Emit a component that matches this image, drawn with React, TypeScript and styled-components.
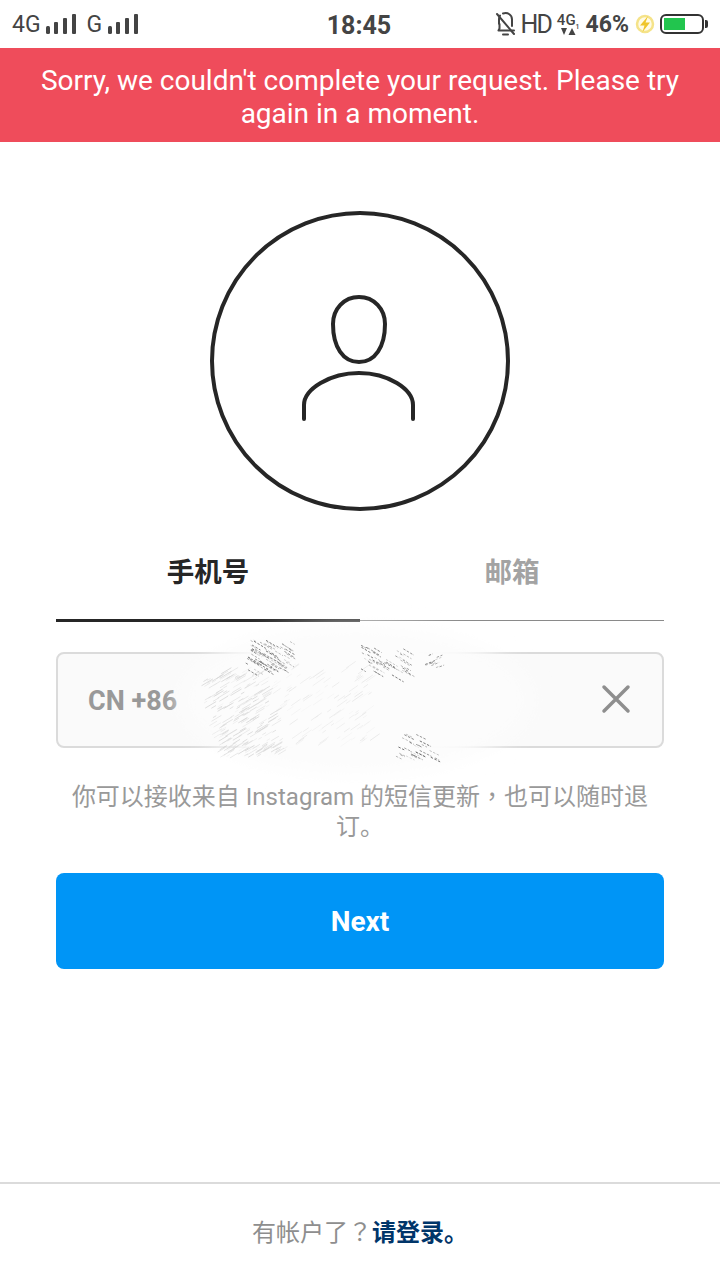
import React from "react";
import styled, { createGlobalStyle } from "styled-components";

const SANS = `Roboto, "Noto Sans CJK SC", sans-serif`;

type Stroke = { x1: number; y1: number; x2: number; y2: number; o: number };

// pencil hatching, slope < 0 goes up to the right
function makeStrokes(
  count: number,
  x: number,
  y: number,
  w: number,
  h: number,
  slope: number,
  skew: number,
  seed: number
) {
  let s = seed;
  const rnd = () => {
    s = (s * 9301 + 49297) % 233280;
    return s / 233280;
  };
  const list: Stroke[] = [];
  for (let i = 0; i < count; i++) {
    const py = y + rnd() * h;
    const px = x + rnd() * w + (py - y) * skew;
    const len = 3 + rnd() * 9;
    list.push({ x1: px, y1: py, x2: px + len, y2: py + len * slope, o: 0.2 + rnd() * 0.7 });
  }
  return list;
}

function Scribble() {
  const dark = [
    ...makeStrokes(75, 250, 640, 42, 30, 0.6, -0.2, 11),
    ...makeStrokes(45, 356, 645, 50, 30, 0.6, 0.15, 23),
    ...makeStrokes(26, 388, 734, 42, 24, 0.5, 0.3, 37),
    ...makeStrokes(10, 420, 655, 20, 14, -0.4, 0, 41),
  ];
  const soft = makeStrokes(220, 196, 672, 64, 86, -0.6, 0.25, 51);
  const faint = makeStrokes(110, 270, 665, 100, 85, -0.7, 0, 67);
  return (
    <Smudge viewBox="56 620 608 170">
      <defs>
        <filter id="soft" x="-30%" y="-30%" width="160%" height="160%">
          <feGaussianBlur stdDeviation="10" />
        </filter>
      </defs>
      <ellipse cx="356" cy="700" rx="176" ry="74" fill="#fcfcfc" filter="url(#soft)" />
      {faint.map((l, i) => (
        <line key={i} x1={l.x1} y1={l.y1} x2={l.x2} y2={l.y2} stroke="#e8e8e8" strokeWidth="1" opacity={l.o} />
      ))}
      {soft.map((l, i) => (
        <line key={i} x1={l.x1} y1={l.y1} x2={l.x2} y2={l.y2} stroke="#d8d8d8" strokeWidth="1" opacity={l.o} />
      ))}
      {dark.map((l, i) => (
        <line
          key={i}
          x1={l.x1}
          y1={l.y1}
          x2={l.x2}
          y2={l.y2}
          stroke="#666"
          strokeWidth="1"
          strokeDasharray="2.5 1.5"
          opacity={l.o}
        />
      ))}
    </Smudge>
  );
}

function Signal() {
  return (
    <svg width="32" height="24" viewBox="0 0 32 24">
      <rect x="1" y="14" width="4" height="8" rx="1.5" fill="#444" />
      <rect x="9" y="10" width="4" height="12" rx="1" fill="#444" />
      <rect x="18" y="6" width="4" height="16" rx="1" fill="#444" />
      <rect x="27" y="2" width="4" height="20" rx="1" fill="#444" />
    </svg>
  );
}

function App() {
  return (
    <Page>
      <GlobalStyle />
      <StatusBar>
        <StatusLeft>
          <NetLabel>4G</NetLabel>
          <Signal />
          <NetLabel $gap>G</NetLabel>
          <Signal />
        </StatusLeft>
        <Clock>18:45</Clock>
        <StatusRight>
          <svg width="21" height="26" viewBox="0 0 21 26" fill="none" stroke="#444" strokeWidth="2" strokeLinecap="round">
            <path d="M4 13V8a6.500 6.500 0 0 1 1-3.500M8 2.500c5-1.500 9 1.500 9 6V15M3.500 19.500H19M3.500 19.500l1-2V13" />
            <path d="M2 3l17 20" />
            <path d="M8 23.500h5" />
          </svg>
          <Hd>HD</Hd>
          <MiniNet>
            <MiniLabel>4G<sub>1</sub></MiniLabel>
            <svg width="16" height="8" viewBox="0 0 16 8" fill="#444">
              <path d="M1 0h6L4 7z" />
              <path d="M12 0l3.500 7h-7z" />
            </svg>
          </MiniNet>
          <Percent>46%</Percent>
          <svg width="20" height="22" viewBox="0 0 20 22">
            <circle cx="10" cy="11" r="8" fill="#fffbe6" stroke="#f5e389" strokeWidth="2.500" />
            <path d="M13 3 5 12.500H9.500L7.500 19l7.500-9.500H10.500z" fill="#efc52b" />
          </svg>
          <Battery>
            <BatteryFill />
          </Battery>
        </StatusRight>
      </StatusBar>
      <Banner>Sorry, we couldn't complete your request. Please try again in a moment.</Banner>
      <Main>
        <Avatar>
          <svg width="300" height="300" viewBox="210 211 300 300" fill="none" stroke="#262626" strokeLinecap="round">
            <circle cx="360" cy="361" r="148" strokeWidth="4" />
            <path
              d="M359 297c-15 0-26 12-26 27 0 23 10 38 26 38s26-15 26-38c0-15-11-27-26-27z"
              strokeWidth="4"
            />
            <path d="M304 419v-14c0-16 26-32 55-32s54 16 54 32v14" strokeWidth="4" />
          </svg>
        </Avatar>
        <Tabs>
          <Tab $active>手机号</Tab>
          <Tab>邮箱</Tab>
        </Tabs>
        <FieldWrap>
          <Field>
            <Prefix>CN +86</Prefix>
            <ClearIcon width="32" height="32" viewBox="0 0 32 32">
              <path d="M4 4l24 24M28 4 4 28" />
            </ClearIcon>
          </Field>
          <Scribble />
        </FieldWrap>
        <Hint>
          <HintLine>
            你可以接收来自 Instagram 的短信更新<Punct>，</Punct>也可以随时退
          </HintLine>
          <HintLine>订。</HintLine>
        </Hint>
        <NextButton>Next</NextButton>
      </Main>
      <Footer>
        有帐户了<Punct>？</Punct>
        <LoginLink>请登录。</LoginLink>
      </Footer>
    </Page>
  );
}

const GlobalStyle = createGlobalStyle`
  html, body { margin: 0; padding: 0; background: #fff; }
  * { box-sizing: border-box; }
`;

const Page = styled.div`
  width: 720px;
  height: 1280px;
  display: flex;
  flex-direction: column;
  font-family: ${SANS};
  background: #fff;
  overflow: hidden;
`;

const StatusBar = styled.div`
  height: 48px;
  display: grid;
  grid-template-columns: 1fr auto 1fr;
  align-items: center;
  padding: 0 14px 0 12px;
  color: #444;
`;

const StatusLeft = styled.div`
  display: flex;
  align-items: center;
  gap: 4px;
`;

const NetLabel = styled.span<{ $gap?: boolean }>`
  font-size: 23px;
  margin-left: ${(p) => (p.$gap ? "6px" : "0")};
  margin-right: ${(p) => (p.$gap ? "1px" : "0")};
`;

const Clock = styled.span`
  padding-top: 2px;
  font-size: 25px;
  font-weight: 700;
  color: #444;
`;

const StatusRight = styled.div`
  display: flex;
  align-items: center;
  justify-content: flex-end;
  gap: 5px;
`;

const Hd = styled.span`
  font-size: 25px;
  letter-spacing: -2px;
`;

const MiniNet = styled.div`
  display: flex;
  flex-direction: column;
  align-items: center;
  margin: 0 1px 0 1px;
`;

const MiniLabel = styled.span`
  font-size: 15px;
  line-height: 16px;
  font-weight: 500;
  sub {
    font-size: 7px;
    line-height: 0;
  }
`;

const Percent = styled.span`
  font-size: 23px;
  font-weight: 700;
  margin-right: 1px;
`;

const Battery = styled.div`
  position: relative;
  width: 44px;
  height: 20px;
  border: 2px solid #333;
  border-radius: 6px;
  padding: 2px;
  margin-right: 2px;
  &::after {
    content: "";
    position: absolute;
    right: -6px;
    top: 4px;
    width: 3px;
    height: 8px;
    border-radius: 0 2px 2px 0;
    background: #333;
  }
`;

const BatteryFill = styled.div`
  width: 21px;
  height: 100%;
  background: #22c54e;
`;

const Banner = styled.div`
  height: 94px;
  padding: 16px 36px 0;
  background: #ef4c5b;
  color: #fff;
  font-size: 28px;
  line-height: 33px;
  text-align: center;
`;

const Main = styled.div`
  flex: 1;
  display: flex;
  flex-direction: column;
  padding: 69px 56px 0;
`;

const Avatar = styled.div`
  display: flex;
  justify-content: center;
  height: 300px;
`;

const Tabs = styled.div`
  display: flex;
  margin-top: 30px;
`;

const Tab = styled.div<{ $active?: boolean }>`
  flex: 1;
  height: ${(p) => (p.$active ? "81px" : "80px")};
  padding-top: 12px;
  text-align: center;
  font-size: 27.5px;
  line-height: 40px;
  font-weight: 700;
  color: ${(p) => (p.$active ? "#262626" : "#a3a3a3")};
  border-bottom: ${(p) => (p.$active ? "3px solid #262626" : "1px solid #8a8a8a")};
`;

const FieldWrap = styled.div`
  position: relative;
  margin-top: 30px;
`;

const Field = styled.div`
  height: 96px;
  display: flex;
  align-items: center;
  justify-content: space-between;
  padding: 0 30px;
  background: #fafafa;
  border: 2px solid #dbdbdb;
  border-radius: 8px;
`;

const Prefix = styled.span`
  padding-top: 2px;
  font-size: 27px;
  font-weight: 700;
  color: #999;
`;

const ClearIcon = styled.svg`
  fill: none;
  stroke: #8e8e8e;
  stroke-width: 3.5;
  stroke-linecap: round;
  margin-bottom: 2px;
`;

const Smudge = styled.svg`
  position: absolute;
  left: 0;
  top: -32px;
  width: 608px;
  height: 170px;
  pointer-events: none;
  overflow: visible;
`;

const Hint = styled.div`
  margin-top: 34px;
  color: #999;
  font-size: 24px;
  line-height: 30px;
  text-align: center;
`;

const HintLine = styled.div`
  white-space: nowrap;
`;

// centred full-width punctuation, as in the reference
const Punct = styled.span`
  font-family: Roboto, "Noto Sans CJK TC", sans-serif;
`;

const NextButton = styled.button`
  margin-top: 31px;
  height: 96px;
  border: 0;
  border-radius: 8px;
  background: #0095f6;
  color: #fff;
  font-family: ${SANS};
  font-size: 28px;
  font-weight: 700;
`;

const Footer = styled.div`
  height: 98px;
  border-top: 2px solid #dbdbdb;
  padding-top: 32px;
  text-align: center;
  color: #8e8e8e;
  font-size: 24px;
  line-height: 34px;
`;

const LoginLink = styled.span`
  color: #003569;
  font-weight: 700;
`;

export default App;
